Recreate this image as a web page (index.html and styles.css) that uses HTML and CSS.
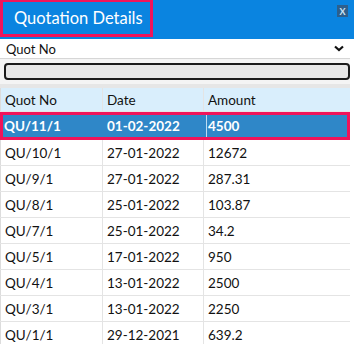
FILE: index.html
```html
<!DOCTYPE html>
<html lang="en">
<head>
    <meta charset="UTF-8">
    <title>Quotation Details</title>
    <link rel="stylesheet" href="styles.css">
</head>
<body>
    <div class="panel">
        <div class="title-bar">
            <h1 class="title">Quotation Details</h1>
            <span class="close">X</span>
        </div>

        <div class="filter">
            <div class="select">
                <span>Quot No</span>
                <svg class="chevron" width="10" height="7" viewBox="0 0 10 7"><path d="M1 1.5 L5 5 L9 1.5" fill="none" stroke="#111" stroke-width="2.2"/></svg>
            </div>
            <div class="search"></div>
        </div>

        <div class="grid">
            <div class="row head">
                <div class="cell">Quot No</div>
                <div class="cell">Date</div>
                <div class="cell">Amount</div>
            </div>
            <div class="row selected">
                <div class="cell">QU/11/1</div>
                <div class="cell">01-02-2022</div>
                <div class="cell">4500</div>
            </div>
            <div class="row">
                <div class="cell">QU/10/1</div>
                <div class="cell">27-01-2022</div>
                <div class="cell">12672</div>
            </div>
            <div class="row">
                <div class="cell">QU/9/1</div>
                <div class="cell">27-01-2022</div>
                <div class="cell">287.31</div>
            </div>
            <div class="row">
                <div class="cell">QU/8/1</div>
                <div class="cell">25-01-2022</div>
                <div class="cell">103.87</div>
            </div>
            <div class="row">
                <div class="cell">QU/7/1</div>
                <div class="cell">25-01-2022</div>
                <div class="cell">34.2</div>
            </div>
            <div class="row">
                <div class="cell">QU/5/1</div>
                <div class="cell">17-01-2022</div>
                <div class="cell">950</div>
            </div>
            <div class="row">
                <div class="cell">QU/4/1</div>
                <div class="cell">13-01-2022</div>
                <div class="cell">2500</div>
            </div>
            <div class="row">
                <div class="cell">QU/3/1</div>
                <div class="cell">13-01-2022</div>
                <div class="cell">2250</div>
            </div>
            <div class="row">
                <div class="cell">QU/1/1</div>
                <div class="cell">29-12-2021</div>
                <div class="cell">639.2</div>
            </div>
        </div>
    </div>
</body>
</html>
```

FILE: styles.css
```css
body {
    margin: 0;
    font-family: Lato, 'Liberation Sans', sans-serif;
    color: #111;
    background-color: #fff;
    overflow: hidden;
}
.panel {
    width: 354px;
}
.title-bar {
    height: 39px;
    background-color: #0a84e0;
    display: flex;
    justify-content: space-between;
    align-items: flex-start;
}
.title {
    margin: 0;
    height: 37px;
    width: 153px;
    box-sizing: border-box;
    border: 3px solid #f0145a;
    border-top-width: 2px;
    padding-left: 11px;
    display: flex;
    align-items: center;
    white-space: nowrap;
    font-size: 16.5px;
    font-weight: 400;
    color: #fff;
}
.close {
    margin: 5px 6px 0 0;
    width: 11px;
    height: 12px;
    background-color: #2d5f8c;
    color: #cfe6f7;
    font-size: 9px;
    font-weight: 700;
    display: flex;
    justify-content: center;
    align-items: center;
}
.filter {
    width: 350px;
    background-color: #f4f4f4;
    padding-bottom: 4px;
}
.select {
    height: 19px;
    background-color: #fff;
    border-bottom: 1px solid #d6d6d6;
    display: flex;
    justify-content: space-between;
    align-items: center;
    padding: 0 6px 0 6px;
    font-size: 13px;
}
.search {
    margin: 4px 0 0 4px;
    height: 13px;
    background-color: #e6e6e6;
    border: 2px solid #1a1a1a;
    border-radius: 4px;
}
.grid {
    width: 350px;
    border-top: 4px solid #e6e6e6;
}
.row {
    display: grid;
    grid-template-columns: 102px 101px 1fr;
    height: 26px;
    border-bottom: 1px solid #e4e4e4;
    box-sizing: border-box;
    font-size: 13.5px;
}
.cell {
    display: flex;
    align-items: center;
    padding-left: 4px;
    border-left: 1px solid #e4e4e4;
}
.row .cell:first-child {
    border-left: 1px solid #dcdcdc;
}
.head {
    height: 24px;
    background-color: #d9eefc;
}
.selected {
    background-color: #2f87c8;
    color: #fff;
    font-weight: 700;
    border: 3px solid #f0145a;
    height: 28px;
}
.selected .cell {
    padding-left: 1px;
    border-left-color: #2f87c8;
}
.selected .cell:first-child {
    border-left: none;
}
.selected .cell:nth-child(3) {
    border-left-color: #bcdcf2;
}
```
